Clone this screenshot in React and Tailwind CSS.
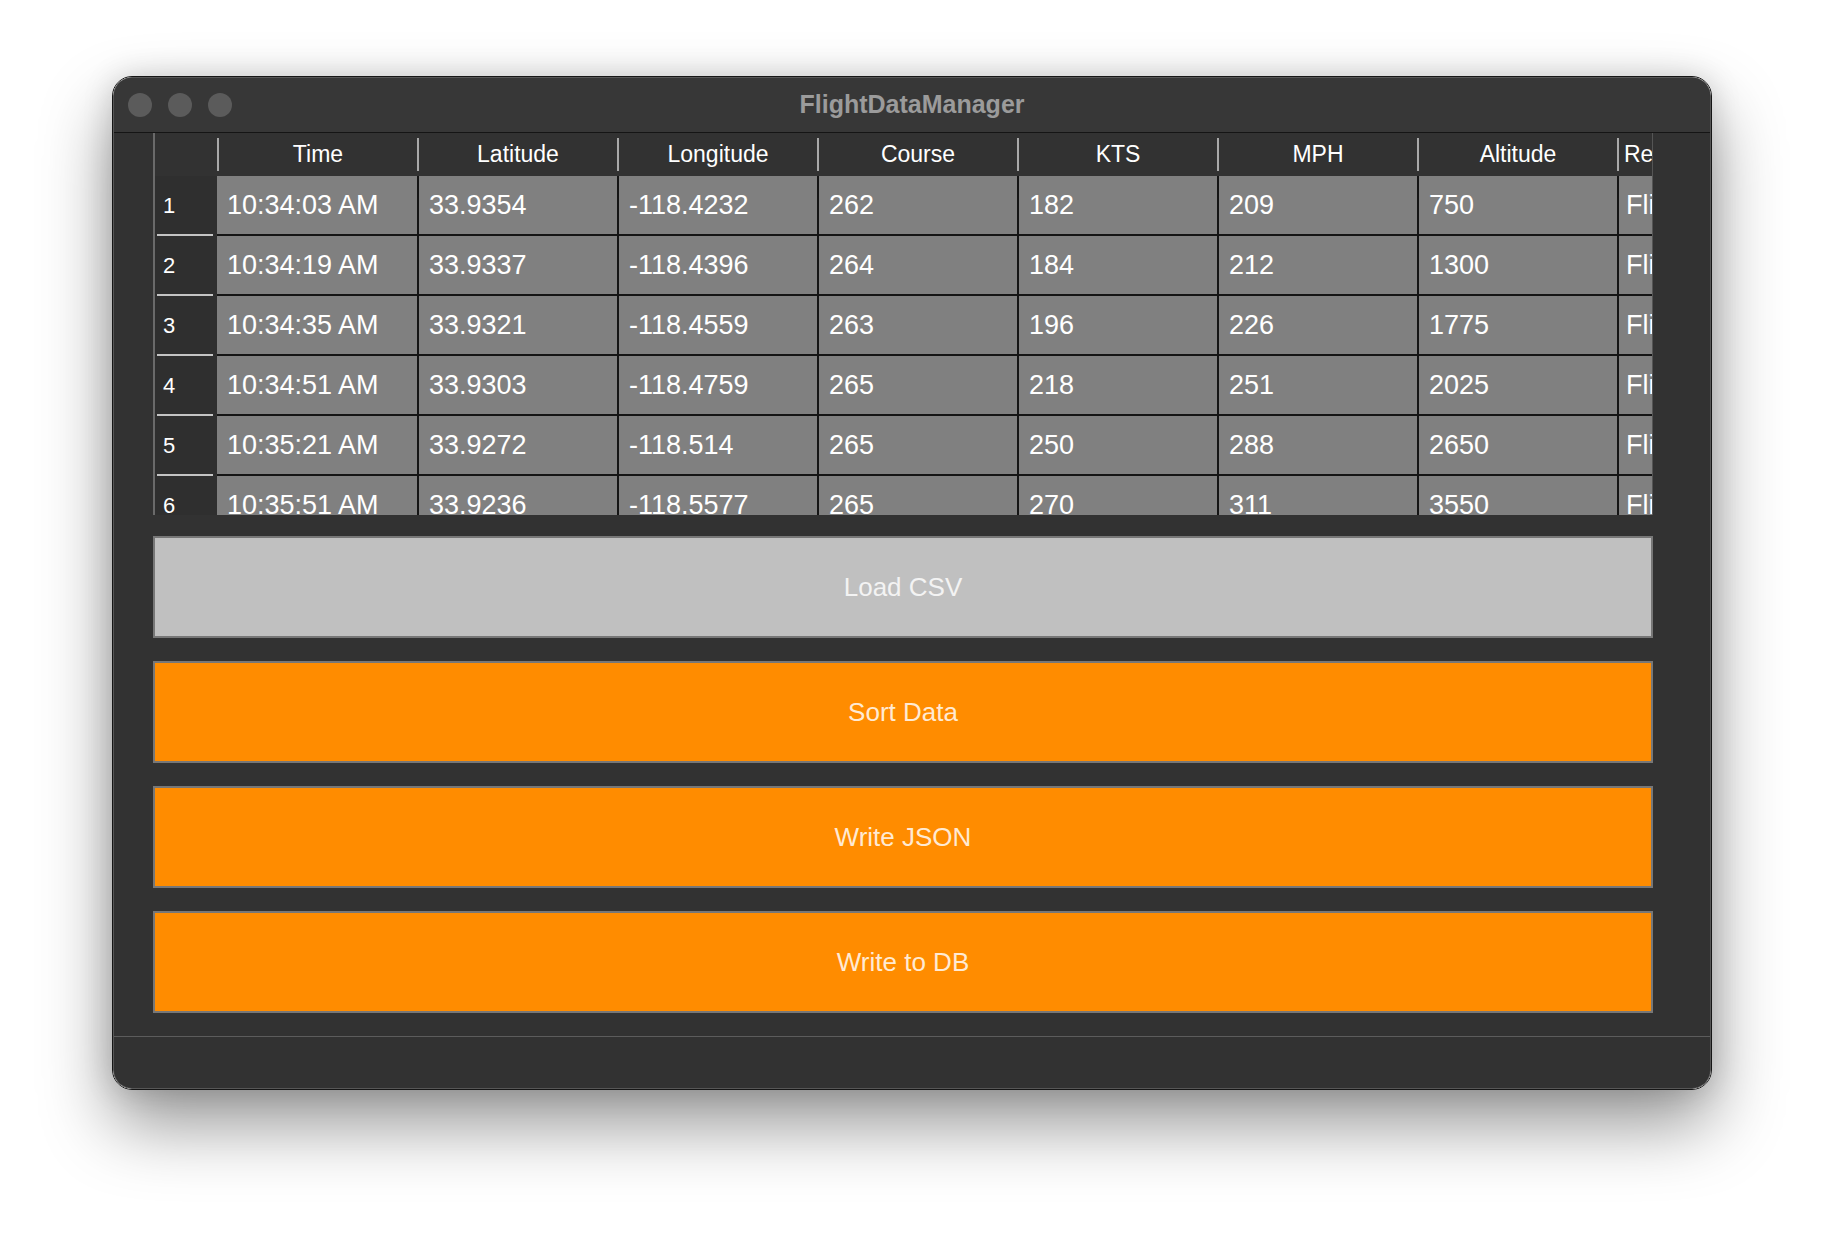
const columns = ['Time', 'Latitude', 'Longitude', 'Course', 'KTS', 'MPH', 'Altitude'];

const rows = [
  ['10:34:03 AM', '33.9354', '-118.4232', '262', '182', '209', '750'],
  ['10:34:19 AM', '33.9337', '-118.4396', '264', '184', '212', '1300'],
  ['10:34:35 AM', '33.9321', '-118.4559', '263', '196', '226', '1775'],
  ['10:34:51 AM', '33.9303', '-118.4759', '265', '218', '251', '2025'],
  ['10:35:21 AM', '33.9272', '-118.514', '265', '250', '288', '2650'],
  ['10:35:51 AM', '33.9236', '-118.5577', '265', '270', '311', '3550'],
];

const buttons = [
  { label: 'Load CSV', className: 'bg-[#c0c0c0] text-[#f3f3f3]' },
  { label: 'Sort Data', className: 'bg-[#ff8c00] text-[#ffead3]' },
  { label: 'Write JSON', className: 'bg-[#ff8c00] text-[#ffead3]' },
  { label: 'Write to DB', className: 'bg-[#ff8c00] text-[#ffead3]' },
];

const HeaderCell = ({ label }) => (
  <div className="w-[200px] shrink-0 flex items-center">
    <div className="w-[2px] h-[33px] bg-[#a9a9a9]"></div>
    <div className="flex-1 text-center text-[23px] text-white">{label}</div>
  </div>
);

const DataRow = ({ index, values }) => (
  <div className="flex h-[60px] shrink-0">
    {/* row number */}
    <div className="w-[62px] shrink-0 flex flex-col bg-[#2f2f2f]">
      <div className="flex-1 flex items-center pl-[8px] text-[22px] text-white">{index}</div>
      <div className="h-[2px] ml-[2px] mr-[4px] bg-[#c4c4c4]"></div>
    </div>
    {values.map((v, i) => (
      <div
        key={i}
        className={`w-[200px] shrink-0 flex items-center pl-[10px] bg-[#808080] border-b-2 border-[#151515] text-[27px] text-white ${i > 0 ? 'border-l-2' : ''}`}
      >
        {v}
      </div>
    ))}
    <div className="flex-1 flex items-center pl-[7px] bg-[#808080] border-b-2 border-l-2 border-[#151515] text-[27px] text-white whitespace-nowrap overflow-hidden">
      Flight
    </div>
  </div>
);

const App = () => {
  return (
    <div className="w-full h-[1238px] bg-white flex justify-center pt-[76px] font-['Liberation_Sans','Arial',sans-serif]">
      <div className="w-[1600px] self-start rounded-[20px] border border-[#161616] shadow-[0_34px_70px_rgba(0,0,0,0.42),0_0_30px_rgba(0,0,0,0.15)] overflow-hidden">
        <div className="rounded-[19px] border border-[#575757] bg-[#323232] overflow-hidden">
          {/* title bar */}
          <div className="h-[55px] flex items-center bg-[#373737] border-b border-[#151515]">
            <div className="flex gap-[16px] pl-[14px]">
              <div className="w-[24px] h-[24px] rounded-full bg-[#5b5b5b]"></div>
              <div className="w-[24px] h-[24px] rounded-full bg-[#5b5b5b]"></div>
              <div className="w-[24px] h-[24px] rounded-full bg-[#5b5b5b]"></div>
            </div>
            <div className="flex-1 text-center pr-[118px] text-[25px] font-bold text-[#9b9b9b]">FlightDataManager</div>
          </div>

          {/* content */}
          <div className="pl-[39px]">
            <div className="w-[1500px] h-[382px] overflow-hidden flex flex-col border-l-2 border-[#6a6a6a] border-r border-r-[#555555]">
              <div className="flex h-[43px] shrink-0 bg-[#323232]">
                <div className="w-[62px] shrink-0"></div>
                {columns.map((c) => (
                  <HeaderCell key={c} label={c} />
                ))}
                <div className="flex-1 flex items-center overflow-hidden">
                  <div className="w-[2px] h-[33px] bg-[#a9a9a9] shrink-0"></div>
                  <div className="pl-[5px] text-[23px] text-white whitespace-nowrap">Remarks</div>
                </div>
              </div>
              {rows.map((r, i) => (
                <DataRow key={i} index={i + 1} values={r} />
              ))}
            </div>

            <div className="w-[1500px] mt-[21px] flex flex-col gap-[23px]">
              {buttons.map((b) => (
                <button
                  key={b.label}
                  className={`h-[102px] w-full border-2 border-[#777777] flex items-center justify-center text-[26px] ${b.className}`}
                >
                  {b.label}
                </button>
              ))}
            </div>
          </div>

          <div className="mt-[23px] h-[52px] border-t border-[#5c5c5c]"></div>
        </div>
      </div>
    </div>
  );
};

export default App;
